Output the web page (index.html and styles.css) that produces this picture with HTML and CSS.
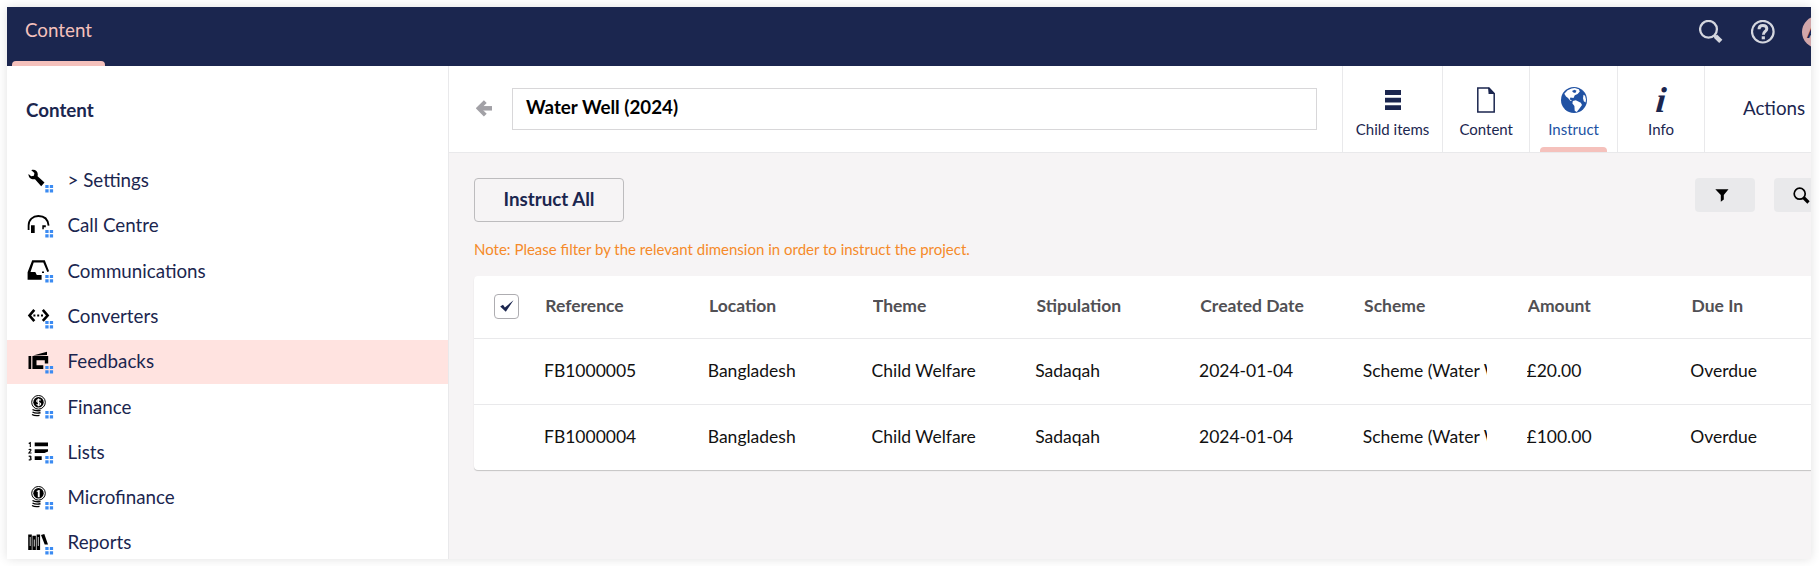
FILE: index.html
```html
<!DOCTYPE html>
<html lang="en">
<head>
<meta charset="utf-8">
<title>Content</title>
<link rel="stylesheet" href="styles.css">
</head>
<body>
<div class="app">
  <header class="topbar">
    <nav class="sections"><a class="section">Content</a></nav>
    <div class="tools">
      <svg class="tool-icon" width="24" height="24" viewBox="0 0 24 24" fill="none" stroke="#d4d6de"><circle cx="9.500" cy="9.300" r="8.400" stroke-width="2.300"/><path d="M15 15.200l1.600 1.400" stroke-width="2.500"/><path d="M16.400 16.200l5.400 5.200" stroke-width="4.600"/></svg>
      <svg class="tool-icon" width="24" height="24" viewBox="0 0 24 24" fill="none" stroke="#d4d6de"><circle cx="11.800" cy="11.700" r="10.800" stroke-width="2.200"/><path d="M8 9.200c0-2.500 1.600-3.700 3.900-3.700s3.900 1.300 3.900 3.200c0 2.700-3.400 2.900-3.400 6" stroke-width="3"/><path d="M12.300 16.300v3" stroke-width="3.200"/></svg>
      <span class="avatar">A</span>
    </div>
  </header>
  <div class="body">
    <aside class="sidebar">
      <h5 class="tree-title">Content</h5>
      <ul class="tree">
        <li class="node"><svg class="node-icon" viewBox="0 0 28 32"><path d="M4.300 6.200C7.600 5 10.800 7.200 10.800 10.300L10.600 12.200L17.500 18.500L14.200 22.200L8 15.200C4.800 16 1.300 13.800 1.500 10L4.200 12.300L6.900 11.700L7.400 9Z"/><use href="#dots"/></svg>&gt; Settings</li>
        <li class="node"><svg class="node-icon" viewBox="0 0 28 32"><path d="M1.600 21v-4.500C1.600 10.800 5.800 7 11.400 7s9.600 3.400 10.200 9.600" fill="none" stroke="#000" stroke-width="1.800"/><path d="M4 16.300h3.700V24H4zM15.300 16.300h3.500v2h-2v2h-1.500z"/><use href="#dots"/></svg>Call Centre</li>
        <li class="node"><svg class="node-icon" viewBox="0 0 28 32"><path d="M.6 18.200L5.200 6.300h12.600l4.300 11-1.800.8L16.300 8.400H6.700L3.500 18h4.800l1.500 3h4.800v4.700H.6z"/><path d="M15 17.500h2v1.600h-2z"/><use href="#dots"/></svg>Communications</li>
        <li class="node"><svg class="node-icon" viewBox="0 0 28 32"><path d="M7.300 9.900L2.500 15.500l4.800 5.700M15.800 9.900l4.800 5.600-4.800 5.300" fill="none" stroke="#000" stroke-width="2.600"/><path d="M6.400 14.500h2v2h-2zM10.200 14.500h2v2h-2zM14 14.500h2v2h-2z"/><use href="#dots"/></svg>Converters</li>
        <li class="node active"><svg class="node-icon" viewBox="0 0 28 32"><path d="M1.500 11h2.700v13H1.500zM6 10.400L20 6.700v3.200L10 10.400z"/><path d="M5.400 11h15.800v7.500h-3.400v-3.200H9.500v5h6.800V24H5.400z"/><use href="#dots"/></svg>Feedbacks</li>
        <li class="node"><svg class="node-icon" viewBox="0 0 28 32"><use href="#medal"/><path d="M13.700 10.200c-2.200-1.500-4.700 0-3.700 1.500.8 1 3.200.6 3.600 2 .4 1.500-2.400 2-4 .7M11.500 8.500v7.800" fill="none" stroke="#fff" stroke-width="1.200"/><use href="#dots"/></svg>Finance</li>
        <li class="node"><svg class="node-icon" viewBox="0 0 28 32"><path d="M7.700 7.500H21v3.800H7.700zM7.700 14.300H21v2.200l-3.500 1.500H7.700zM7.700 21.200h7v3.700h-7z"/><path d="M1.700 8.600L3.300 7.700v4.200M1.700 14.800c1-1 2.500-.6 2.200.5L1.900 18h2.600M1.700 21.400c2.700-.8 3 1 1.200 1.600 2.200.4 1.600 2.400-1.200 1.700" fill="none" stroke="#000" stroke-width="1.100"/><use href="#dots"/></svg>Lists</li>
        <li class="node"><svg class="node-icon" viewBox="0 0 28 32"><use href="#medal"/><path d="M9.700 10l2-1h1v7.200h-1.900v-5.400h-1.100z" fill="#fff"/><use href="#dots"/></svg>Microfinance</li>
        <li class="node"><svg class="node-icon" viewBox="0 0 28 32"><path d="M1.200 8.500h3.600V24H1.200zM5.400 9.800h3.500V24H5.400zM9.600 8.500h3.500V24H9.600zM14 9l3.300-1 3.700 10.500h-3.300z"/><path d="M3.200 11v9M7.300 13.500v7M11.300 11v9" stroke="#fff" stroke-width=".8"/><use href="#dots"/></svg>Reports</li>
      </ul>
    </aside>
    <main class="editor">
      <div class="editor-header">
        <svg class="back" width="16" height="17" viewBox="0 0 16 17" fill="none" stroke="#a2a1a6"><path d="M9.300 1.600L2.500 8.300l6.800 6.900" stroke-width="4"/><path d="M3 8.300h13" stroke-width="4.500"/></svg>
        <div class="name-field">Water Well (2024)</div>
        <nav class="apps">
          <a class="app-tab w-child"><svg class="tab-icon" viewBox="0 0 26 26"><path d="M5 3h16v5H5zM5 10.800h16v4.700H5zM5 18.300h16V23H5z"/></svg>Child items</a>
          <a class="app-tab w-tab"><svg class="tab-icon" viewBox="0 0 26 26"><path d="M4.800 1H16l5.200 5.500V25H4.800z" fill="none" stroke="#1b264f" stroke-width="1.500"/><path d="M15 .3L22 7h-6.400z"/></svg>Content</a>
          <a class="app-tab w-tab current"><svg class="tab-icon" viewBox="0 0 26 26"><circle cx="13" cy="13" r="13"/><path d="M3.300 6.700L6.600 3.300 10.500 1.600l3.300-.7 4 1.300 1 2.300-2.200 2.600-2.800 1.200-1.300 2.600-3-.3-.8 1.600 2.500 1.700-2-.2-2.200-2.600L5 9.600zM11.800 14l3-.7 5 2.500 1.200 2.200-2.500 3.400-2.800 3.700-2-1.300-.3-4.700-2-2.700zM22.500 7.800l1.600 1 .9 3.800-.4 2.800-1.800-1.200-.8-3z" fill="#fff"/><path d="M11 4l2.500-1.300 2 1-1.200 2.200-2-.4z"/></svg>Instruct</a>
          <a class="app-tab w-tab"><span class="tab-icon glyph-i">i</span>Info</a>
          <a class="actions">Actions</a>
        </nav>
      </div>
      <section class="workspace">
        <div class="toolbar">
          <button class="instruct-all">Instruct All</button>
          <div class="filters">
            <span class="filter"><svg width="14" height="13" viewBox="0 0 14 13"><path d="M.3.300h13.200L8.800 6v4.500L5.800 12.800V6z"/></svg></span>
            <span class="filter"><svg width="17" height="17" viewBox="0 0 17 17" fill="none" stroke="#000"><circle cx="6.700" cy="6.700" r="5.500" stroke-width="1.700"/><path d="M10.500 10.500l5 5" stroke-width="3.200"/></svg></span>
          </div>
        </div>
        <p class="note">Note: Please filter by the relevant dimension in order to instruct the project.</p>
        <div class="table">
          <div class="row head">
            <span class="check"><svg width="14" height="12" viewBox="0 0 14 12"><path d="M.2 6.500L3 4.800l1.900 2.600L13.500.2 5.800 11.800z"/></svg></span>
            <span class="cell">Reference</span><span class="cell">Location</span><span class="cell">Theme</span><span class="cell">Stipulation</span><span class="cell">Created Date</span><span class="cell">Scheme</span><span class="cell">Amount</span><span class="cell">Due In</span>
          </div>
          <div class="row">
            <span class="cell">FB1000005</span><span class="cell">Bangladesh</span><span class="cell">Child Welfare</span><span class="cell">Sadaqah</span><span class="cell">2024-01-04</span><span class="cell">Scheme (Water Well)</span><span class="cell">£20.00</span><span class="cell">Overdue</span>
          </div>
          <div class="row">
            <span class="cell">FB1000004</span><span class="cell">Bangladesh</span><span class="cell">Child Welfare</span><span class="cell">Sadaqah</span><span class="cell">2024-01-04</span><span class="cell">Scheme (Water Well)</span><span class="cell">£100.00</span><span class="cell">Overdue</span>
          </div>
        </div>
      </section>
    </main>
  </div>
</div>
<svg class="defs" width="0" height="0">
  <defs>
    <g id="dots"><path d="M18.300 20.900h3.300v3.200h-3.300zM22.800 20.900h3.300v3.200h-3.300zM18.300 25.200h3.300v3.200h-3.300zM22.800 25.200h3.300v3.200h-3.300z" fill="#3b8bf2"/></g>
    <g id="medal"><circle cx="11.500" cy="12.300" r="6.800" fill="none" stroke="#000" stroke-width="1"/><circle cx="11.500" cy="12.300" r="5.200"/><path d="M5.500 19.500c2 1.300 5 1.500 8 1M5.500 22c2 1.200 5 1.400 8 .8M5 24.500c2 1.200 5 1.300 7.500.9" fill="none" stroke="#000" stroke-width="1.400"/></g>
  </defs>
</svg>
</body>
</html>
```
FILE: styles.css
```css
* { box-sizing: border-box; }
body { margin: 0; padding: 7px; background: #fff; overflow: hidden; font-family: Lato, sans-serif; font-size: 18.75px; color: #1b264f; }
.app { width: 1804px; height: 552px; display: flex; flex-direction: column; overflow: hidden; background: #f6f4f5; box-shadow: 0 0 10px rgba(0,0,0,.12); }
.defs { display: block; height: 0; }

.topbar { flex: none; height: 59px; display: flex; justify-content: space-between; background: #1b264f; }
.sections { display: flex; padding-left: 5px; }
.section { position: relative; display: block; width: 93px; height: 59px; padding-left: 13px; line-height: 46px; color: #f5c1bc; }
.section::after { content: ""; position: absolute; left: 0; right: 0; bottom: 0; height: 5px; background: #f5c1bc; border-radius: 4px 4px 0 0; }
.tools { display: flex; align-items: flex-start; width: 112px; padding-top: 13px; }
.tool-icon { flex: none; margin-right: 28px; }
.avatar { flex: none; width: 32px; height: 32px; margin: -4px 0 0 -1px; padding-left: 5px; border-radius: 50%; background: #d1a6aa; line-height: 32px; font-size: 16px; font-weight: 700; }

.body { flex: 1; min-height: 0; display: flex; }
.sidebar { flex: none; width: 442px; background: #fff; border-right: 1px solid #e9e9eb; overflow: hidden; }
.tree-title { margin: 0; height: 92.8px; padding-left: 19px; line-height: 87px; font-size: 18.75px; font-weight: 700; }
.tree { list-style: none; margin: 0; padding: 0; display: grid; gap: 1.6px; }
.node { height: 43.7px; display: flex; align-items: center; padding: 0 0 1.9px 20px; }
.node.active { background: #ffe3e0; }
.node-icon { flex: none; width: 28px; height: 32px; margin-right: 12.5px; }

.editor { flex: 1; min-width: 0; overflow: hidden; }
.editor-header { height: 87px; display: flex; align-items: center; background: #fff; border-bottom: 1px solid #e9e9eb; padding-left: 27px; }
.back { flex: none; margin: 0 20px 2px 0; }
.name-field { flex: none; width: 805px; height: 42px; border: 1px solid #d8d7d9; padding-left: 13px; line-height: 35px; font-weight: 700; color: #000; }
.apps { display: flex; align-self: stretch; margin-left: 25px; }
.app-tab { flex: none; display: flex; flex-direction: column; align-items: center; padding-top: 21px; font-size: 15px; line-height: 18px; border-left: 1px solid #e9e9eb; position: relative; white-space: nowrap; }
.w-child { width: 100px; }
.w-tab { width: 87.4px; }
.tab-icon { width: 26px; height: 26px; margin-bottom: 7px; fill: #1b264f; }
.current { color: #2152a3; }
.current .tab-icon { fill: #2152a3; }
.current::after { content: ""; position: absolute; left: 10px; right: 10px; bottom: 0; height: 5px; background: #f5c1bc; border-radius: 4px 4px 0 0; }
.glyph-i { font: italic 700 36px/26px "Liberation Serif", serif; text-align: center; transform: skewX(-5deg); }
.actions { flex: none; border-left: 1px solid #e9e9eb; padding-left: 37.8px; line-height: 84px; width: 160px; }

.workspace { padding: 25px 0 0 25px; }
.toolbar { display: flex; justify-content: space-between; align-items: flex-start; }
.instruct-all { width: 150px; height: 44px; padding: 0 0 4px; border: 1px solid #bdbcbe; border-radius: 4px; background: transparent; font: 700 18.75px Lato, sans-serif; color: #1b264f; }
.filters { display: flex; gap: 19px; width: 116px; }
.filter { flex: none; width: 60px; height: 34px; border-radius: 4px; background: #e9e9eb; display: flex; align-items: center; padding-left: 20px; }
.filter + .filter { padding-left: 19px; }
.note { margin: 17px 0 0; font-size: 15px; line-height: 20px; color: #f58a29; }
.table { width: 1400px; margin-top: 17px; border-radius: 4px; background: #fff; box-shadow: 0 1px 1px rgba(0,0,0,.2); font-size: 17.5px; color: #111; }
.row { display: flex; gap: 40px; align-items: center; height: 66px; padding: 0 0 2px 70px; border-top: 1px solid #e9e9eb; white-space: nowrap; }
.row.head { height: 62px; border: 0; padding: 0 0 2px 20px; color: #515054; font-weight: 700; }
.cell { flex: none; width: 123.75px; overflow: hidden; line-height: 24px; }
.check { flex: none; width: 25px; height: 25px; margin-right: -13.7px; border: 1px solid #aeadb1; border-radius: 4px; display: flex; align-items: center; justify-content: center; }
.check svg { fill: #1b264f; }
```
